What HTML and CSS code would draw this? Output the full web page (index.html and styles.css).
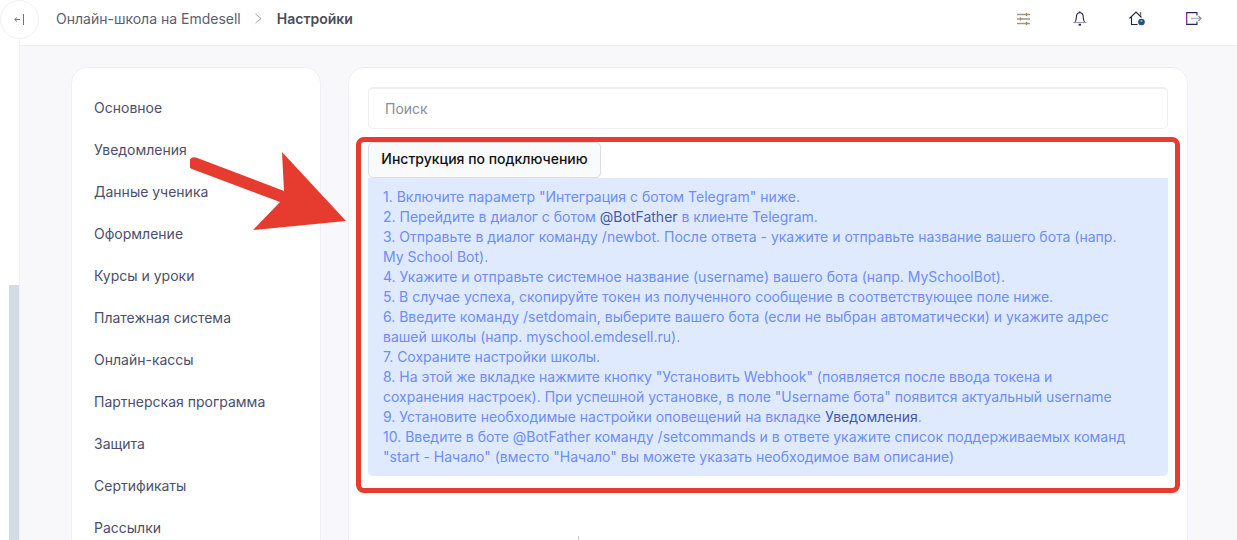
FILE: index.html
```html
<!DOCTYPE html>
<html lang="ru">
<head>
	<meta charset="UTF-8">
	<title>Настройки</title>
	<link rel="stylesheet" href="styles.css">
</head>
<body>
	<div class="rail"><span class="rail-thumb"></span></div>
	<div class="page">
		<header class="topbar">
			<nav class="crumbs">
				<a href="#">Онлайн-школа на Emdesell</a>
				<svg class="crumb-sep" width="7" height="11" viewBox="0 0 7 11" fill="none" stroke="#a3a6b4"><path d="M.5 1l5.500 4.500-5.500 4.500"/></svg>
				<b>Настройки</b>
			</nav>
			<div class="tools">
				<a href="#"><svg width="16" height="12" viewBox="0 0 16 12" fill="none" stroke="#9a9a92" stroke-width="1.300"><path d="M0 1.500h13M0 6h13M0 10.500h13"/><path d="M9.500 0v3M3.500 4.500v3M9.500 9v3" stroke="#b8852f"/></svg></a>
				<a href="#"><svg width="16" height="15" viewBox="0 0 16 15" fill="none" stroke="#1e2547" stroke-width="1.100"><path d="M2 11c.9-1 1.300-2.200 1.300-4.300C3.300 3.800 4.700 1.800 6.800 1.800s3.500 2 3.500 4.900c0 2.100.4 3.300 1.300 4.300"/><path d="M.3 11.500h13" stroke="#9a9aa6"/><path d="M6.800 .3V2"/><path d="M5.600 13.700h2.400" stroke-width="1.800"/></svg></a>
				<a href="#"><svg width="17" height="15" viewBox="0 0 17 15" fill="none" stroke="#1e2547" stroke-width="1.100"><path d="M.5 7.500L7 1l5.500 5.500"/><path d="M2.500 6V13.500H8.500"/><path d="M11.500 1v4" stroke="#7a6a4a" stroke-width="1.400"/><circle cx="12.500" cy="11" r="3.300" fill="#1f4f82" stroke="none"/><circle cx="12.500" cy="10" r="1.100" fill="#c9a77a" stroke="none"/></svg></a>
				<a href="#"><svg width="16" height="13" viewBox="0 0 16 13" fill="none" stroke="#1e2a5e" stroke-width="1.100"><path d="M11 3.500V.6H.6v11.800H11V9.500"/><path d="M.6 .6v11.800" stroke="#8f2fa8"/><path d="M5 6.500h9.500" stroke="#b4b4bc" stroke-width="1.500"/><path d="M12.500 4l2.500 2.500L12.500 9" stroke="#8a7fb0"/></svg></a>
			</div>
		</header>
		<main class="main">
			<aside class="card side">
				<a href="#">Основное</a>
				<a href="#">Уведомления</a>
				<a href="#">Данные ученика</a>
				<a href="#">Оформление</a>
				<a href="#">Курсы и уроки</a>
				<a href="#">Платежная система</a>
				<a href="#">Онлайн-кассы</a>
				<a href="#">Партнерская программа</a>
				<a href="#">Защита</a>
				<a href="#">Сертификаты</a>
				<a href="#">Рассылки</a>
			</aside>
			<section class="card content">
				<input class="search" type="text" placeholder="Поиск">
				<button class="tab" type="button">Инструкция по подключению</button>
				<div class="note">
					1. Включите параметр "Интеграция с ботом Telegram" ниже.<br>
					2. Перейдите в диалог с ботом <a href="#">@BotFather</a> в клиенте Telegram.<br>
					3. Отправьте в диалог команду /newbot. После ответа - укажите и отправьте название вашего бота (напр. My School Bot).<br>
					4. Укажите и отправьте системное название (username) вашего бота (напр. MySchoolBot).<br>
					5. В случае успеха, скопируйте токен из полученного сообщение в соответствующее поле ниже.<br>
					6. Введите команду /setdomain, выберите вашего бота (если не выбран автоматически) и укажите адрес вашей школы (напр. myschool.emdesell.ru).<br>
					7. Сохраните настройки школы.<br>
					8. На этой же вкладке нажмите кнопку "Установить Webhook" (появляется после ввода токена и сохранения настроек). При успешной установке, в поле "Username бота" появится актуальный username<br>
					9. Установите необходимые настройки оповещений на вкладке <a href="#">Уведомления</a>.<br>
					10. Введите в боте @BotFather команду /setcommands и в ответе укажите список поддерживаемых команд "start - Начало" (вместо "Начало" вы можете указать необходимое вам описание)
				</div>
				<span class="tick"></span>
			</section>
		</main>
	</div>

	<a class="back" href="#">
		<svg width="11" height="11" viewBox="0 0 11 11" fill="none" stroke="#6b7280"><path d="M6 5.500H.8M3 3.300L.8 5.500 3 7.700"/><path d="M9.500 0v11"/></svg>
	</a>

	<!-- annotation drawn on top of the screenshot -->
	<div class="mark-box"></div>
	<svg class="mark-arrow" width="170" height="90" viewBox="190 150 170 90"><path fill="#e63c2f" d="M196 157.500L284 191 282 152 346 221 253 230 280 202 192 169Q187 167 189 161 191 156 196 157.500z"/></svg>
</body>
</html>
```

FILE: styles.css
```css
* {box-sizing: border-box;}
html, body {margin: 0; padding: 0; height: 540px; overflow: hidden;}
body {display: flex; position: relative; background: #fff; font: 400 14px/20px Inter, "Liberation Sans", sans-serif; color: #4b4f6b;}
a {color: inherit; text-decoration: none;}

.rail {flex: none; width: 20px; padding: 285px 0 0 9px; background: #fff; border-right: 1px solid #eff0f5;}
.rail-thumb {display: block; width: 10px; height: 255px; background: #d5dbe5;}
.page {flex: 1; display: flex; flex-direction: column; min-width: 0; height: 540px;}

.topbar {flex: none; display: flex; align-items: center; height: 46px; padding: 0 35px 8px 36px; border-bottom: 1px solid #eff0f5; background: #fff;}
.back {display: flex; align-items: center; justify-content: center; position: absolute; left: 0; top: 0; width: 39px; height: 39px; border: 1px solid #eff0f6; border-radius: 50%; background: #fff;}
.crumbs {display: flex; align-items: center; color: #5b6070;}
.crumb-sep {margin: 0 15px 0 14px;}
.crumbs b {font-weight: 600; color: #4a4e5a;}
.tools {display: flex; align-items: center; margin-left: auto; gap: 40px;}
.tools a {display: flex;}

.main {flex: 1; display: flex; align-items: flex-start; gap: 27px; min-height: 0; overflow: hidden; padding: 21px 49px 0 51px; background: #f8f8fa;}
.card {background: #fff; border: 1px solid #eeeef7; border-radius: 16px;}
.side {flex: none; display: flex; flex-direction: column; width: 250px; height: 600px; padding: 19px 22px;}
.side a {flex: none; display: flex; align-items: center; height: 42px;}
.content {flex: 1; height: 600px; padding: 19px;}

.search {display: block; width: 100%; height: 42px; padding: 0 16px; border: 1px solid #eeeff3; border-top-width: 2px; border-radius: 5px; background: #fff; font: 400 14px Inter, "Liberation Sans", sans-serif; color: #4b4f6b;}
.search::placeholder {color: #8a8d96;}
.tab {display: block; width: 233px; height: 36px; margin-top: 13px; padding: 0 0 4px; border: 1px solid #dcdee3; border-radius: 5px; background: #f9fafb; font: 500 14px Inter, "Liberation Sans", sans-serif; color: #111;}
.note {padding: 9px 40px 9px 15px; border-radius: 0 0 5px 5px; background: #e0eafe; color: #6c8dfb;}
.note a {color: #4658ac;}
.tick {display: block; width: 1px; height: 10px; margin: 60px 0 0 210px; background: #c9c9c9;}

.mark-box {position: absolute; left: 356px; top: 137px; width: 824px; height: 356px; border: 5px solid #e63c2f; border-radius: 8px;}
.mark-arrow {position: absolute; left: 190px; top: 150px;}
```
